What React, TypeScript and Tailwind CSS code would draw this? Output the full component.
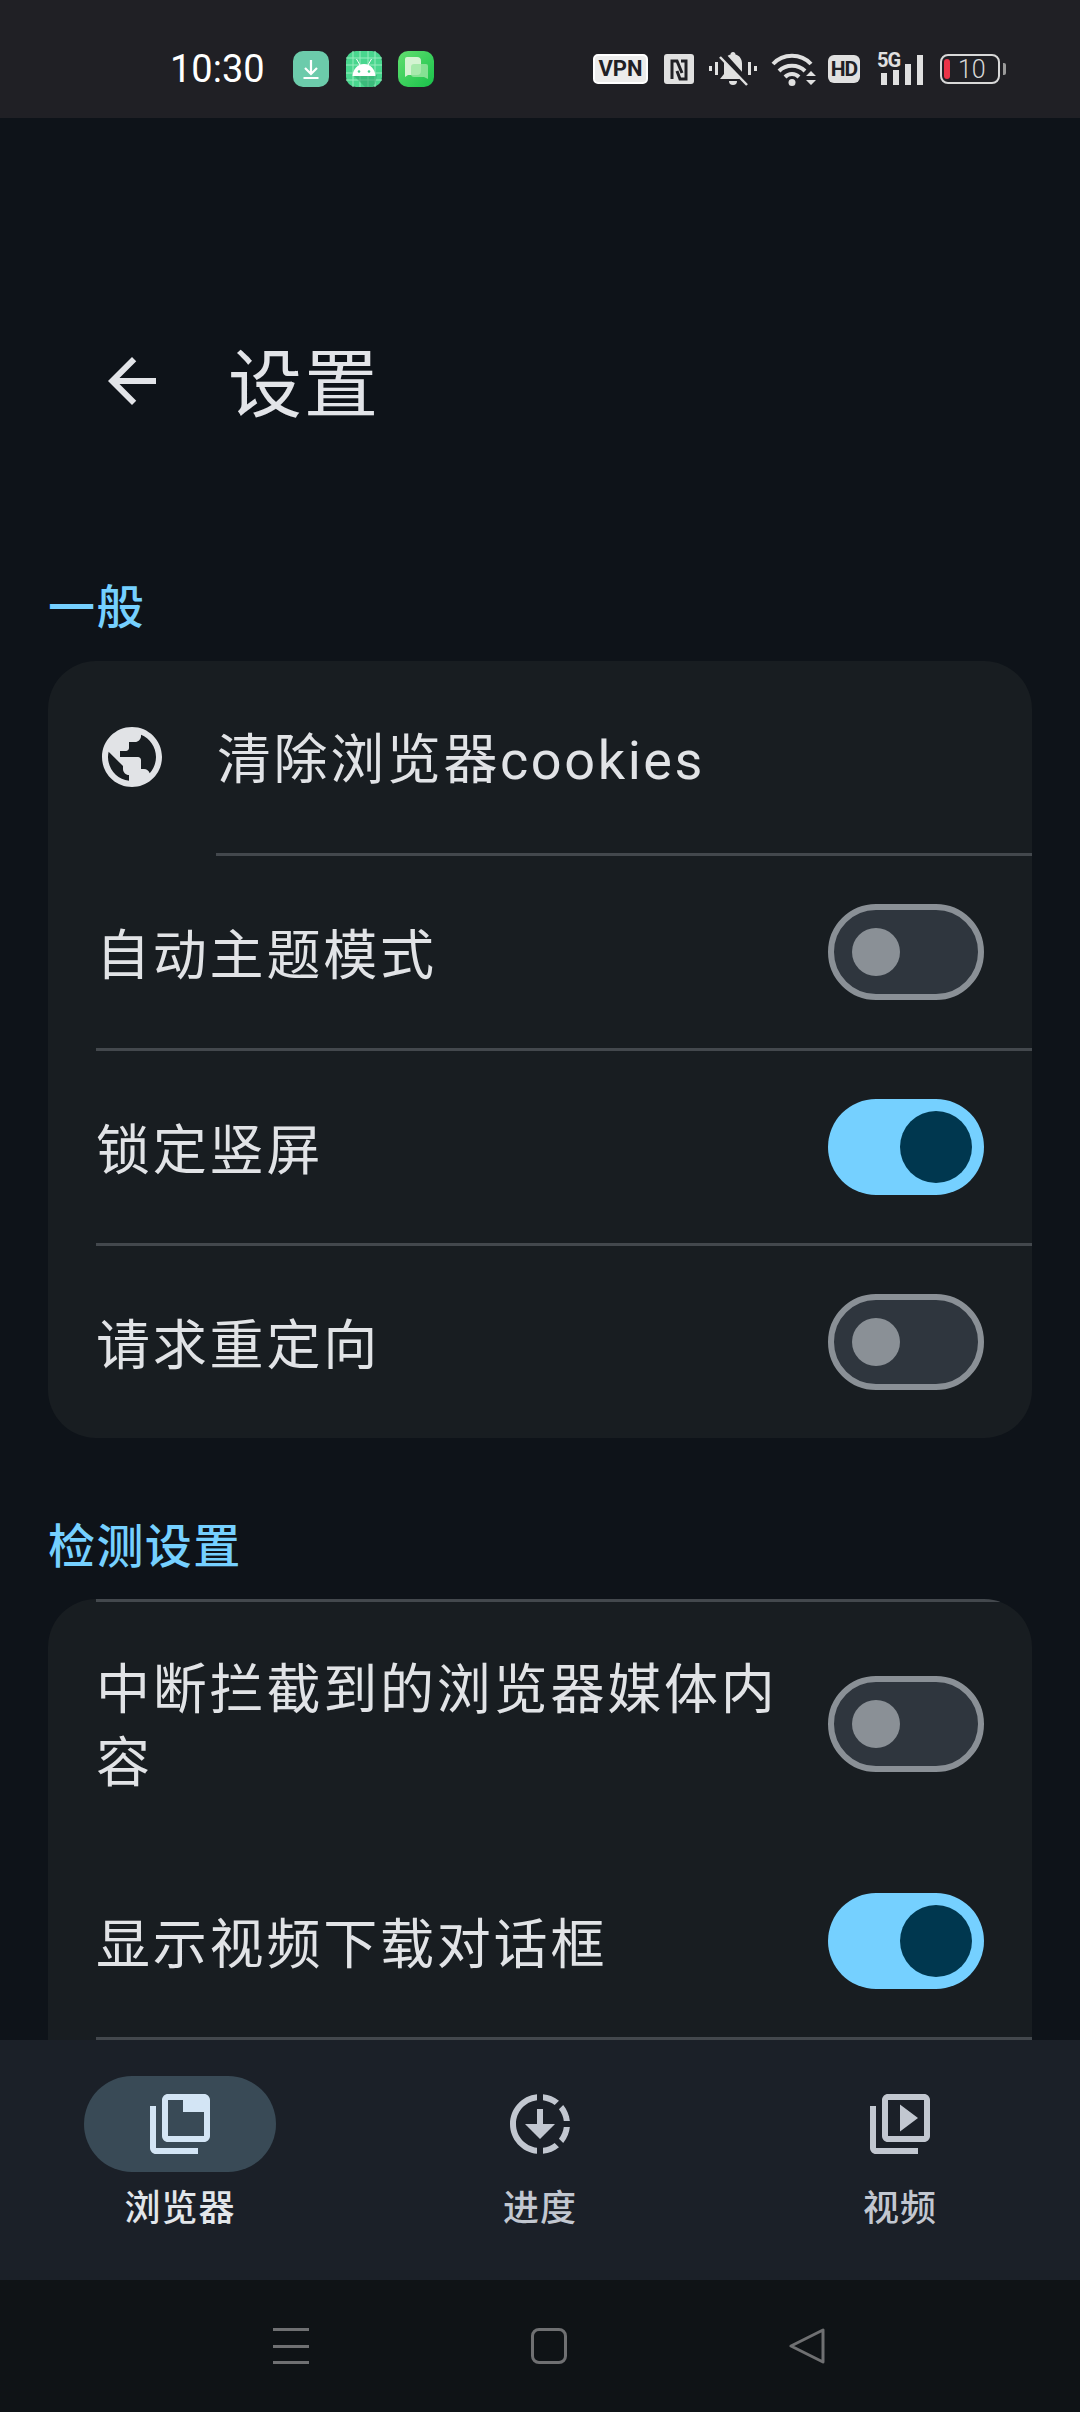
import { MdArrowBack, MdPublic, MdDownloading, MdOutlineVideoLibrary } from "react-icons/md";

const Toggle = ({ on }: { on: boolean }) =>
  on ? (
    <div className="flex h-[96px] w-[156px] shrink-0 items-center justify-end rounded-full bg-[#75d0ff] pr-[12px]">
      <div className="h-[72px] w-[72px] rounded-full bg-[#00374f]" />
    </div>
  ) : (
    <div className="flex h-[96px] w-[156px] shrink-0 items-center rounded-full border-[6px] border-[#8a9096] bg-[#2f363e] pl-[18px]">
      <div className="h-[48px] w-[48px] rounded-full bg-[#8a9096]" />
    </div>
  );

const Divider = ({ inset = "ml-[48px]" }: { inset?: string }) => <div className={`h-[3px] bg-[#43484d] ${inset}`} />;

const SettingRow = ({ label, on }: { label: string; on: boolean }) => (
  <div className="flex h-[192px] items-center gap-[48px] px-[48px]">
    <span className="flex-1 pt-[8px] text-[54px] leading-[73px] tracking-[2.8px] text-[#e1e3e6]">{label}</span>
    <Toggle on={on} />
  </div>
);

const SectionTitle = ({ children, className }: { children: string; className: string }) => (
  <h2 className={`ml-[48px] pt-[3px] text-[47px] leading-[72px] font-medium tracking-[1.4px] text-[#75d0ff] ${className}`}>{children}</h2>
);

const TabsIcon = () => (
  <svg viewBox="0 0 24 24" className="h-[72px] w-[72px]" fill="#d3e5f5">
    <path d="M4 6H2v14c0 1.1.9 2 2 2h14v-2H4V6z" />
    <path fillRule="evenodd" d="M20 2H8c-1.1 0-2 .9-2 2v12c0 1.1.9 2 2 2h12c1.1 0 2-.9 2-2V4c0-1.1-.9-2-2-2zM8 4h5v4h7v8H8V4z" />
  </svg>
);

const NavItem = ({ label, active, icon }: { label: string; active?: boolean; icon: React.ReactNode }) => (
  <div className="flex flex-col items-center pt-[36px]">
    <div className={`flex h-[96px] w-[192px] items-center justify-center rounded-full ${active ? "bg-[#394a56]" : ""}`}>{icon}</div>
    <span className={`mt-[10px] text-[36px] leading-[54px] font-medium tracking-[1px] ${active ? "text-[#e2e6ea]" : "text-[#c2c7d0]"}`}>{label}</span>
  </div>
);

// Status bar glyphs
const DownloadApp = () => (
  <svg viewBox="0 0 36 36" className="h-[36px] w-[36px]">
    <rect width="36" height="36" rx="10" fill="#6ccbab" />
    <path d="M18 9v14M12 17l6 6 6-6M10.500 27h15" stroke="#fff" strokeWidth="2.200" fill="none" />
  </svg>
);

const AndroidApp = () => (
  <svg viewBox="0 0 36 36" className="h-[36px] w-[36px]">
    <rect width="36" height="36" rx="10" fill="#49d68e" />
    <path d="M7 0v36M14 0v36M22 0v36M29 0v36M0 7h36M0 14h36M0 22h36M0 29h36" stroke="#98ecbf" strokeWidth="1" />
    <path d="M7 24 19 36h7l3-3 2-9z" fill="#2fa56b" opacity=".55" />
    <path d="M6.500 25c.5-7 5-12 11.500-12s11 5 11.500 12z" fill="#fff" />
    <path d="m10.500 8 3.500 6M25.500 8 22 14" stroke="#fff" strokeWidth="1" />
    <circle cx="13" cy="20.500" r="1.300" fill="#49d68e" />
    <circle cx="23" cy="20.500" r="1.300" fill="#49d68e" />
  </svg>
);

const MessagesApp = () => (
  <svg viewBox="0 0 36 36" className="h-[36px] w-[36px]">
    <defs>
      <linearGradient id="msgs" x1="0" y1="0" x2="1" y2="1">
        <stop offset="0" stopColor="#62de70" />
        <stop offset="1" stopColor="#18c24a" />
      </linearGradient>
    </defs>
    <rect width="36" height="36" rx="10" fill="url(#msgs)" />
    <path d="M9 6h10a4 4 0 0 1 4 4v10a4 4 0 0 1-4 4H10l-3 2V8a2 2 0 0 1 2-2z" fill="#d4f3d2" />
    <path d="M16 13h12a2 2 0 0 1 2 2v13l-4-2H16a3 3 0 0 1-3-3v-7a3 3 0 0 1 3-3z" fill="#9be6a2" opacity=".8" />
  </svg>
);

const NfcIcon = () => (
  <svg viewBox="0 0 30 30" className="h-[30px] w-[30px]">
    <rect width="30" height="30" rx="3" fill="#e0e0e0" />
    <path d="M8 25V7h5l5 12" fill="none" stroke="#202025" strokeWidth="3" />
    <path d="M17 7h5v18h-6l-3-8" fill="none" stroke="#202025" strokeWidth="3" />
  </svg>
);

const SilentIcon = () => (
  <svg viewBox="0 0 48 34" className="h-[34px] w-[48px]" fill="#e0e0e0">
    <rect x="0" y="14" width="3" height="5" />
    <rect x="6" y="10" width="3" height="13" />
    <rect x="39" y="10" width="3" height="13" />
    <rect x="45" y="14" width="3" height="5" />
    <path d="M24 0c1.500 0 2.500 1 2.500 2.500 4 1 6.500 4.500 6.500 9V22l4 5H11l4-5V11.500c0-4.500 2.500-8 6.500-9C21.500 1 22.500 0 24 0z" />
    <path d="M20 29h8a4 4 0 0 1-8 0z" />
    <path d="M13 2l26 29" stroke="#202025" strokeWidth="6" />
    <path d="M11 5l27 28" stroke="#e0e0e0" strokeWidth="2.500" />
  </svg>
);

const WifiIcon = () => (
  <svg viewBox="0 0 45 33" className="h-[33px] w-[45px]" fill="none" stroke="#e0e0e0" strokeWidth="4">
    <path d="M2 11C12 0 30 0 40 11" />
    <path d="M8 18c7-7 19-7 26 0" />
    <path d="M14 24c4-4 10-4 14 0" />
    <circle cx="21" cy="29.500" r="3.500" fill="#e0e0e0" stroke="none" />
    <path d="m35 23 5-5 5 5zM35 27h10l-5 5z" fill="#e0e0e0" stroke="none" />
  </svg>
);

const SignalBars = () => (
  <div className="relative h-[32px] w-[46px]">
    <span className="absolute top-[-3px] left-0 text-[20px] leading-[20px] font-bold tracking-[-1px] text-[#e0e0e0]">5G</span>
    <div className="absolute inset-x-0 bottom-0 flex items-end gap-[6px] pl-[4px]">
      <div className="h-[12px] w-[6px] bg-[#e0e0e0]" />
      <div className="h-[15px] w-[6px] bg-[#e0e0e0]" />
      <div className="h-[21px] w-[6px] bg-[#e0e0e0]" />
      <div className="h-[30px] w-[6px] bg-[#e0e0e0]" />
    </div>
  </div>
);

const Battery = () => (
  <div className="flex items-center">
    <div className="flex h-[30px] w-[60px] items-center rounded-[8px] border-2 border-[#d8d8d8] pl-[2px]">
      <div className="h-[20px] w-[6px] rounded-[3px] bg-[#ec3448]" />
      <span className="ml-[8px] text-[25px] leading-[25px] font-light text-[#d8d8d8]">10</span>
    </div>
    <div className="ml-[3px] h-[12px] w-[3px] rounded-r-[2px] bg-[#9a9a9a]" />
  </div>
);

export default function App() {
  return (
    <div className="flex h-[2412px] w-[1080px] flex-col overflow-hidden bg-[#0e1319] font-['Roboto','Noto_Sans_CJK_SC',sans-serif]">
      {/* Status bar */}
      <div className="h-[118px] shrink-0 bg-[#202025] pt-[52px]">
        <div className="flex h-[34px] items-center pl-[170px]">
          <span className="w-[123px] text-[38px] leading-[36px] text-white">10:30</span>
          <div className="flex gap-[16.5px]">
            <DownloadApp />
            <AndroidApp />
            <MessagesApp />
          </div>
          <div className="ml-[159px] flex items-center">
            <div className="flex h-[30px] w-[55px] items-center justify-center rounded-[5px] border-2 border-white bg-[#ececec] text-[22px] leading-[22px] font-bold text-[#202025]">VPN</div>
            <div className="ml-[16px]"><NfcIcon /></div>
            <div className="ml-[15px]"><SilentIcon /></div>
            <div className="ml-[14px]"><WifiIcon /></div>
            <div className="ml-[12px] flex h-[28px] w-[32px] items-center justify-center rounded-[6px] bg-[#e0e0e0] text-[21px] leading-[21px] font-bold tracking-[-1px] text-[#202025]">HD</div>
            <div className="ml-[17px]"><SignalBars /></div>
            <div className="ml-[17px]"><Battery /></div>
          </div>
        </div>
      </div>

      {/* Settings content */}
      <main className="min-h-0 flex-1 overflow-hidden">
        <header className="mt-[227px] ml-[96px] flex h-[72px] items-center gap-[60px] text-[#e2e4e8]">
          <MdArrowBack className="h-[72px] w-[72px]" />
          <h1 className="pt-[10px] text-[74px] leading-[72px] tracking-[2px]">设置</h1>
        </header>

        <SectionTitle className="mt-[152px] mb-[17px]">一般</SectionTitle>
        <section className="mx-[48px] rounded-[48px] bg-[#181d21]">
          <div className="flex h-[192px] items-center gap-[48px] px-[48px]">
            <MdPublic className="h-[72px] w-[72px] shrink-0 text-[#e1e3e6]" />
            <span className="pt-[6px] pl-[1px] text-[54px] leading-[73px] tracking-[2.6px] text-[#e1e3e6]">清除浏览器cookies</span>
          </div>
          <Divider inset="ml-[168px]" />
          <SettingRow label="自动主题模式" on={false} />
          <Divider />
          <SettingRow label="锁定竖屏" on />
          <Divider />
          <SettingRow label="请求重定向" on={false} />
        </section>

        <SectionTitle className="mt-[70px] mb-[16px]">检测设置</SectionTitle>
        <section className="mx-[48px] overflow-hidden rounded-t-[48px] bg-[#181d21]">
          <Divider />
          <div className="flex h-[243px] items-center gap-[48px] px-[48px]">
            <span className="flex-1 pt-[7px] text-[54px] leading-[73px] tracking-[2.8px] text-[#e1e3e6]">中断拦截到的浏览器媒体内容</span>
            <Toggle on={false} />
          </div>
          <SettingRow label="显示视频下载对话框" on />
          <Divider />
        </section>
      </main>

      {/* Bottom navigation */}
      <nav className="grid h-[240px] shrink-0 grid-cols-3 bg-[#1b2028]">
        <NavItem label="浏览器" active icon={<TabsIcon />} />
        <NavItem label="进度" icon={<MdDownloading className="h-[72px] w-[72px] text-[#c2c7d0]" />} />
        <NavItem label="视频" icon={<MdOutlineVideoLibrary className="h-[72px] w-[72px] text-[#c2c7d0]" />} />
      </nav>

      {/* System navigation */}
      <div className="h-[132px] shrink-0 bg-[#0f1316] pt-[48px]">
        <div className="flex h-[36px] items-center">
          <div className="ml-[273px] flex h-[36px] w-[36px] flex-col justify-between">
            <div className="h-[3px] bg-[#6f7072]" />
            <div className="h-[3px] bg-[#6f7072]" />
            <div className="h-[3px] bg-[#6f7072]" />
          </div>
          <div className="ml-[222px] h-[36px] w-[36px] rounded-[8px] border-[3px] border-[#6f7072]" />
          <svg viewBox="0 0 36 36" className="ml-[222px] h-[36px] w-[36px]" fill="none" stroke="#6f7072" strokeWidth="3" strokeLinejoin="round">
            <path d="M2 18 34 2v32z" />
          </svg>
        </div>
      </div>
    </div>
  );
}
